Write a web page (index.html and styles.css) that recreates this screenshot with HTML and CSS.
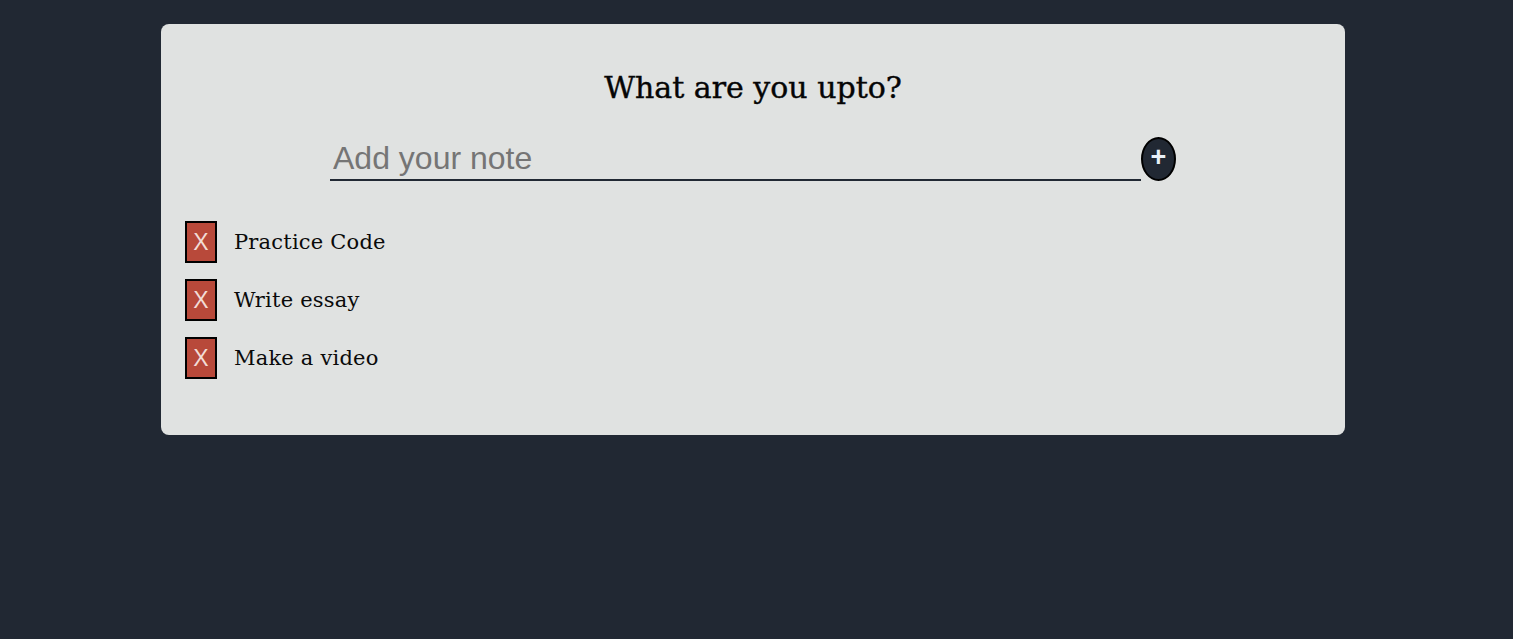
FILE: index.html
```html
<!DOCTYPE html>
<html>
<head>
<meta charset="utf-8">
<link rel="stylesheet" href="styles.css">
</head>
<body>
<div class="page">
  <div class="card">
    <h1 class="title">What are you upto?</h1>
    <form class="add-row">
      <input class="note-input" type="text" placeholder="Add your note">
      <button class="add-btn" type="button">+</button>
    </form>
    <ul class="todo-list">
      <li class="todo-item"><button class="del-btn" type="button">X</button><span class="todo-text">Practice Code</span></li>
      <li class="todo-item"><button class="del-btn" type="button">X</button><span class="todo-text">Write essay</span></li>
      <li class="todo-item"><button class="del-btn" type="button">X</button><span class="todo-text">Make a video</span></li>
    </ul>
  </div>
</div>
</body>
</html>
```
FILE: styles.css
```css
html, body {
  margin: 0;
  padding: 0;
  background: #212833;
  height: 100%;
}
.page {
  padding: 24px 168px 0 161px;
}
.card {
  background: #e0e2e1;
  border-radius: 8px;
  padding: 44px 24px 56px 24px;
}
.title {
  margin: 0;
  text-align: center;
  font-family: "DejaVu Serif", serif;
  font-weight: normal;
  font-size: 30px;
  line-height: 40px;
  color: #050505;
  -webkit-text-stroke: 0.4px #050505;
}
.add-row {
  margin: 29px 0 0 0;
  display: flex;
  justify-content: center;
  align-items: flex-end;
}
.note-input {
  width: 811px;
  box-sizing: border-box;
  border: none;
  border-bottom: 2px solid #212833;
  background: transparent;
  font-family: "Liberation Sans", Arial, sans-serif;
  font-size: 32px;
  padding: 0 3px;
  height: 44px;
  outline: none;
  color: #222;
}
.note-input::placeholder {
  color: #757575;
}
.add-btn {
  width: 35px;
  height: 44px;
  box-sizing: border-box;
  border: 2px solid #000;
  border-radius: 50%;
  background: #212833;
  color: #e8f0f8;
  font-family: "Liberation Sans", Arial, sans-serif;
  font-weight: bold;
  font-size: 27px;
  line-height: 1;
  padding: 0 0 3px 0;
  margin: 0;
  cursor: pointer;
}
.todo-list {
  list-style: none;
  margin: 40px 0 0 0;
  padding: 0;
  display: flex;
  flex-direction: column;
  gap: 16px;
}
.todo-item {
  display: flex;
  align-items: center;
  gap: 17px;
}
.del-btn {
  width: 32px;
  height: 42px;
  box-sizing: border-box;
  border: 2px solid #000;
  background: #b8493a;
  color: #f2dcd6;
  font-family: "Liberation Sans", Arial, sans-serif;
  font-size: 23px;
  padding: 0;
  margin: 0;
}
.todo-text {
  font-family: "DejaVu Serif", serif;
  font-size: 21px;
  color: #0a0a0a;
  letter-spacing: 0.2px;
}
```
